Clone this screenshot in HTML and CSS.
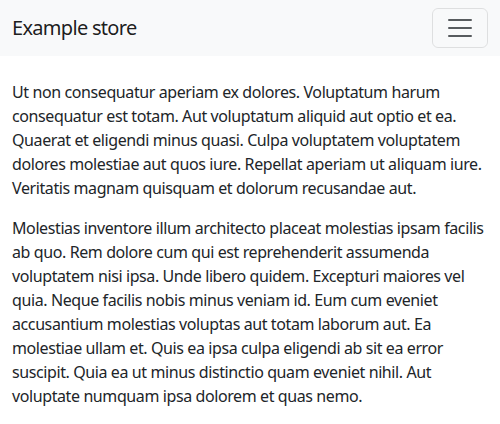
FILE: index.html
```html
<!DOCTYPE html>
<html lang="en">
<head>
<meta charset="utf-8">
<title>Example store</title>
<link rel="stylesheet" href="styles.css">
</head>
<body>
<nav class="navbar">
  <a class="brand" href="#">Example store</a>
  <button class="toggler" type="button" aria-label="Toggle navigation">
    <svg width="30" height="30" viewBox="0 0 30 30" aria-hidden="true"><path stroke="rgba(33,37,41,0.75)" stroke-linecap="round" stroke-miterlimit="10" stroke-width="2" d="M4 7h22M4 15h22M4 23h22"/></svg>
  </button>
</nav>
<main class="content">
  <p>Ut non consequatur aperiam ex dolores. Voluptatum harum consequatur est totam. Aut voluptatum aliquid aut optio et ea. Quaerat et eligendi minus quasi. Culpa voluptatem voluptatem dolores molestiae aut quos iure. Repellat aperiam ut aliquam iure. Veritatis magnam quisquam et dolorum recusandae aut.</p>
  <p>Molestias inventore illum architecto placeat molestias ipsam facilis ab quo. Rem dolore cum qui est reprehenderit assumenda voluptatem nisi ipsa. Unde libero quidem. Excepturi maiores vel quia. Neque facilis nobis minus veniam id. Eum cum eveniet accusantium molestias voluptas aut totam laborum aut. Ea molestiae ullam et. Quis ea ipsa culpa eligendi ab sit ea error suscipit. Quia ea ut minus distinctio quam eveniet nihil. Aut voluptate numquam ipsa dolorem et quas nemo.</p>
</main>
</body>
</html>
```
FILE: styles.css
```css
* { box-sizing: border-box; }
body {
  margin: 0;
  font-family: "Segoe UI", "Noto Sans", sans-serif;
  font-size: 16px;
  line-height: 24px;
  letter-spacing: -0.4px;
  color: #212529;
  background: #fff;
}
.navbar {
  display: flex;
  align-items: center;
  justify-content: space-between;
  padding: 8px 12px;
  background: #f8f9fa;
}
.brand {
  font-size: 20px;
  line-height: 30px;
  letter-spacing: -0.7px;
  padding: 5px 0;
  color: rgba(0,0,0,0.9);
  text-decoration: none;
}
.toggler {
  display: flex;
  align-items: center;
  justify-content: center;
  width: 56px;
  height: 40px;
  padding: 0;
  background: transparent;
  border: 1px solid rgba(0,0,0,0.1);
  border-radius: 6px;
}
.content {
  padding: 24px 12px 0;
}
.content p {
  margin: 0 0 16px;
}
```
